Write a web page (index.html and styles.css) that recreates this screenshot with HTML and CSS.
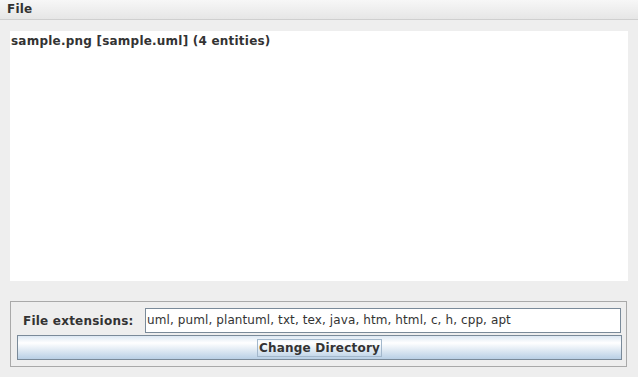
FILE: index.html
```html
<!DOCTYPE html>
<html>
<head>
<meta charset="utf-8">
<link rel="stylesheet" href="styles.css">
</head>
<body>
<div class="app">
  <div class="menubar"><span class="menu">File</span></div>
  <div class="content">
    <div class="list">
      <div class="item">sample.png [sample.uml] (4 entities)</div>
    </div>
    <div class="panel">
      <div class="row">
        <label class="label">File extensions:</label>
        <div class="field">uml, puml, plantuml, txt, tex, java, htm, html, c, h, cpp, apt</div>
      </div>
      <div class="button"><span class="focus">Change Directory</span></div>
    </div>
  </div>
</div>
</body>
</html>
```
FILE: styles.css
```css
html, body {
  margin: 0;
  padding: 0;
  background: #eeeeee;
}
.app {
  width: 638px;
  height: 377px;
  display: flex;
  flex-direction: column;
  font-family: "DejaVu Sans", sans-serif;
  font-size: 12px;
  color: #333333;
}
.menubar {
  height: 19px;
  border-bottom: 1px solid #cfcfcf;
  background: linear-gradient(#f7f7f7, #e6e6e6);
  display: flex;
  align-items: center;
}
.menu {
  font-weight: bold;
  padding-left: 7px;
  line-height: 19px;
  letter-spacing: 0.2px;
}
.content {
  flex: 1;
  display: flex;
  flex-direction: column;
  padding: 11px 10px 0 10px;
}
.list {
  width: 618px;
  height: 250px;
  background: #ffffff;
}
.item {
  font-weight: bold;
  padding: 3px 0 0 1px;
  line-height: 15px;
  letter-spacing: 0.22px;
}
.panel {
  margin-top: 20px;
  border: 1px solid #a9a9a9;
  padding: 6px 4px 0 6px;
  display: flex;
  flex-direction: column;
  gap: 2px;
  width: 605px;
  height: 58px;
}
.row {
  display: flex;
  align-items: center;
  height: 25px;
}
.label {
  font-weight: bold;
  width: 128px;
  padding-left: 6px;
  box-sizing: border-box;
  flex: none;
  letter-spacing: 0.22px;
}
.field {
  box-sizing: border-box;
  width: 476px;
  height: 25px;
  border: 1px solid #7a8a99;
  background: #ffffff;
  padding: 0 0 0 1px;
  line-height: 23px;
  white-space: nowrap;
  letter-spacing: 0.1px;
}
.button {
  box-sizing: border-box;
  width: 605px;
  height: 25px;
  border: 1px solid #7a8a99;
  background: linear-gradient(#dde8f3 0%, #ffffff 30%, #b8cfe5 100%);
  display: flex;
  align-items: center;
  justify-content: center;
  font-weight: bold;
}
.focus {
  border: 1px solid #a3b8cc;
  padding: 0 1px;
  line-height: 16px;
  letter-spacing: 0.2px;
}
```
